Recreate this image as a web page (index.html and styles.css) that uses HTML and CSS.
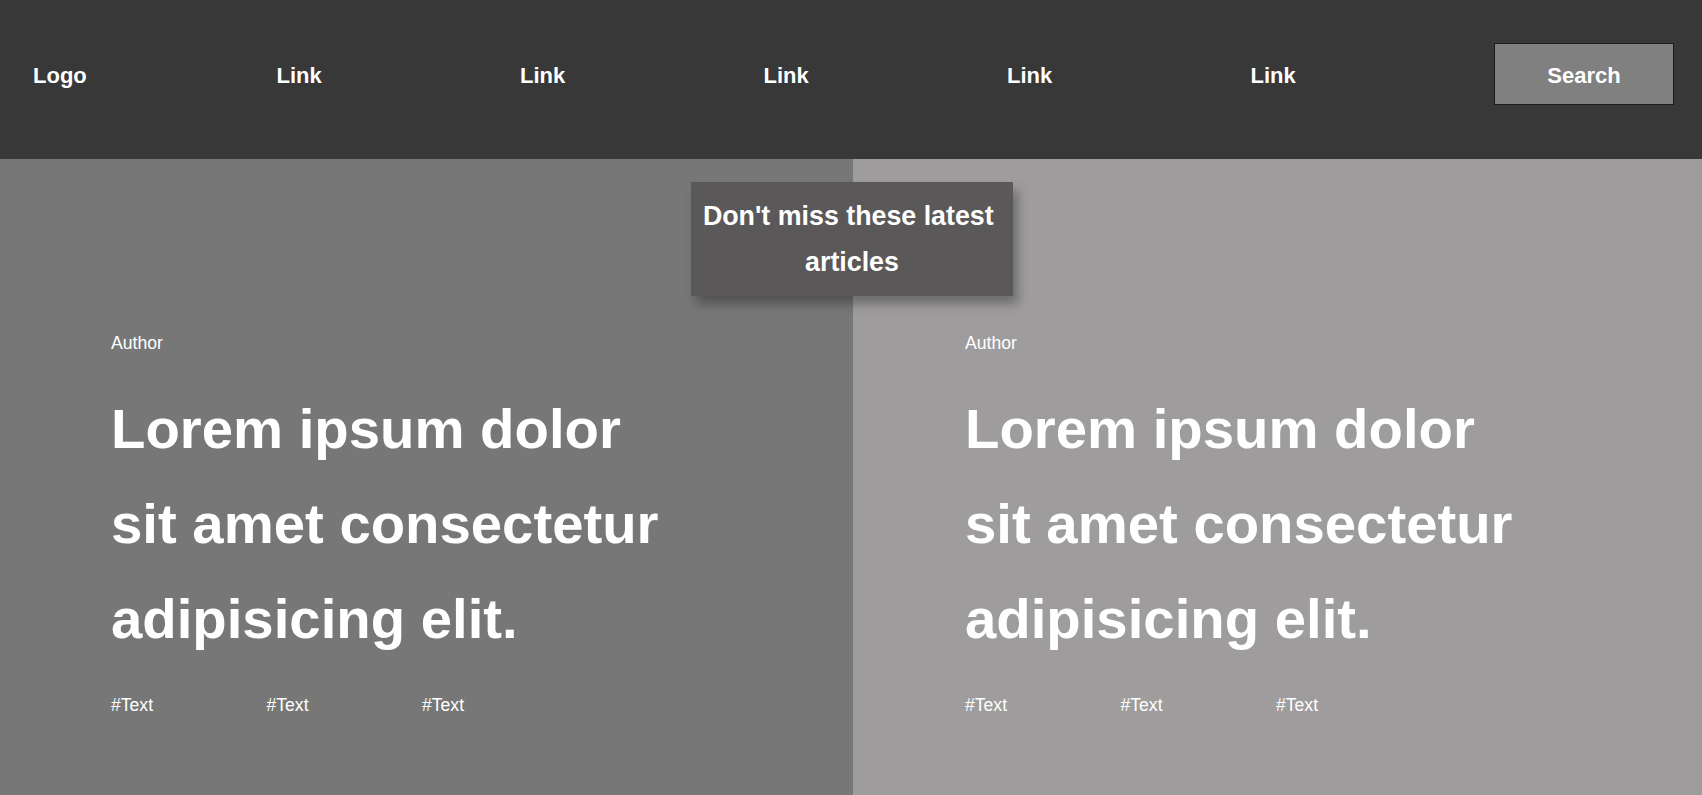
FILE: index.html
```html
<!DOCTYPE html>
<html lang="en">
<head>
<meta charset="utf-8">
<title>Latest articles</title>
<link rel="stylesheet" href="styles.css">
</head>
<body>
<header class="site-header">
  <nav class="nav">
    <a class="nav-item logo" href="#">Logo</a>
    <a class="nav-item" href="#">Link</a>
    <a class="nav-item" href="#">Link</a>
    <a class="nav-item" href="#">Link</a>
    <a class="nav-item" href="#">Link</a>
    <a class="nav-item" href="#">Link</a>
    <button class="search-btn" type="button">Search</button>
  </nav>
</header>
<main class="articles">
  <div class="notice">Don't miss these latest&nbsp; articles</div>
  <article class="article article-dark">
    <div class="article-body">
      <p class="author">Author</p>
      <h1 class="title">Lorem ipsum dolor sit amet consectetur adipisicing elit.</h1>
      <ul class="tags">
        <li>#Text</li>
        <li>#Text</li>
        <li>#Text</li>
      </ul>
    </div>
  </article>
  <article class="article article-light">
    <div class="article-body">
      <p class="author">Author</p>
      <h1 class="title">Lorem ipsum dolor sit amet consectetur adipisicing elit.</h1>
      <ul class="tags">
        <li>#Text</li>
        <li>#Text</li>
        <li>#Text</li>
      </ul>
    </div>
  </article>
</main>
</body>
</html>
```

FILE: styles.css
```css
* {
  box-sizing: border-box;
}

html, body {
  margin: 0;
  padding: 0;
  height: 100%;
  overflow: hidden;
}

body {
  font-family: "Liberation Sans", Arial, sans-serif;
  color: #ffffff;
  background: #9e9c9d;
}

.site-header {
  background: #383838;
  height: 159px;
  padding: 43px 28px 0 33px;
}

.nav {
  display: grid;
  grid-template-columns: repeat(6, 243.5px) 1fr;
  align-items: center;
  height: 62px;
}

.nav-item {
  color: #ffffff;
  text-decoration: none;
  font-weight: bold;
  font-size: 22px;
  line-height: 1;
  padding-top: 4px;
  justify-self: start;
}

.search-btn {
  justify-self: end;
  width: 180px;
  height: 62px;
  background: #808080;
  border: 1px solid #1c1c1c;
  color: #ffffff;
  font-family: "Liberation Sans", Arial, sans-serif;
  font-weight: bold;
  font-size: 22px;
  padding: 4px 0 0;
}

.articles {
  position: relative;
  display: grid;
  grid-template-columns: 853px 1fr;
  height: calc(100vh - 159px);
}

.article {
  padding: 174px 0 0 111px;
}

.article-dark {
  background: #777777;
}

.article-light {
  background: #9e9c9d;
  padding-left: 112px;
}

.article-body {
  max-width: 575px;
}

.author {
  margin: 0;
  font-size: 17.6px;
  line-height: 1.15;
}

.title {
  margin: 28px 0 0;
  font-size: 56.3px;
  line-height: 95px;
  font-weight: bold;
}

.tags {
  list-style: none;
  margin: 29px 0 0;
  padding: 0;
  display: grid;
  grid-template-columns: repeat(3, 155.5px);
  font-size: 17.6px;
  line-height: 1.15;
}

.notice {
  position: absolute;
  top: 23px;
  left: 691px;
  width: 322px;
  height: 114px;
  padding: 12px 10px 0;
  background: #5a5859;
  box-shadow: 5px 8px 10px rgba(0, 0, 0, 0.3);
  text-align: center;
  font-weight: bold;
  font-size: 26.8px;
  line-height: 45.5px;
  z-index: 2;
}
```
